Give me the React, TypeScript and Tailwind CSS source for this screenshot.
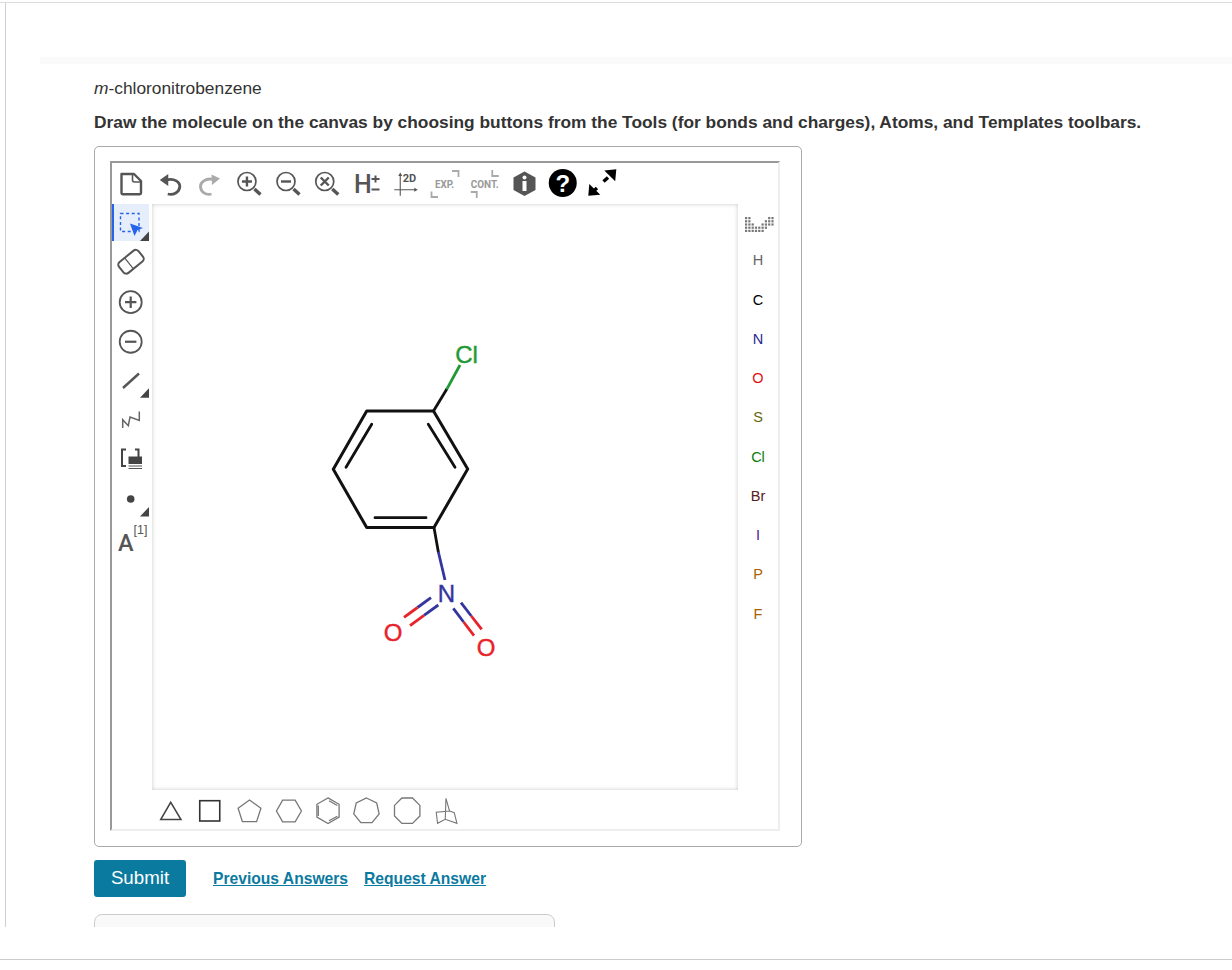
import type { ReactNode } from "react";

const SLOT = 39.25;
const FONT = '"Liberation Sans", Arial, sans-serif';
const ROBOTO = 'Roboto, "Liberation Sans", sans-serif';

// Icons are drawn in page coordinates, the viewBox starts at the slot's corner
function Slot({ x, y, w = SLOT, h = SLOT, children }: { x: number; y: number; w?: number; h?: number; children: ReactNode }) {
  return (
    <svg
      viewBox={`${x} ${y} ${w} ${h}`}
      width={w}
      height={h}
      className="block shrink-0 overflow-visible"
      fill="none"
    >
      {children}
    </svg>
  );
}

function polygon(cx: number, cy: number, r: number, n: number, startDeg: number) {
  const pts: string[] = [];
  for (let i = 0; i < n; i++) {
    const a = ((startDeg + (360 / n) * i) * Math.PI) / 180;
    pts.push(`${(cx + r * Math.cos(a)).toFixed(1)},${(cy + r * Math.sin(a)).toFixed(1)}`);
  }
  return pts.join(" ");
}

function Corner({ y }: { y: number }) {
  return <polygon points={`149,${y} 149,${y + 9.5} 140,${y + 9.5}`} fill="#444" />;
}

function Magnifier({ cx, children }: { cx: number; children: ReactNode }) {
  return (
    <>
      <circle cx={cx} cy={181.5} r={9} stroke="#555" strokeWidth={1.7} />
      <line x1={cx + 7.5} y1={189} x2={cx + 13.5} y2={194.5} stroke="#555" strokeWidth={3.4} />
      {children}
    </>
  );
}

function TopToolbar() {
  const c = (i: number) => 112 + SLOT * i;
  return (
    <div className="flex h-[41px]">
      <Slot x={c(0)} y={163} h={41}>
        <path d="M121.5 174 H134 L141 181 V193 Q141 194.2 139.8 194.2 H122.7 Q121.5 194.2 121.5 193 Z" stroke="#555" strokeWidth={2.4} strokeLinejoin="round" />
        <path d="M132.5 174.5 V180 Q132.5 182 134.5 182 H140.5" stroke="#555" strokeWidth={1.6} />
      </Slot>
      <Slot x={c(1)} y={163} h={41}>
        <polygon points="160,180 168.5,174 168.5,186" fill="#555" />
        <path d="M166 180 C175 177.5 180.5 182.5 180 187 C179.5 192 174 195.5 168 194" stroke="#555" strokeWidth={2.8} />
      </Slot>
      <Slot x={c(2)} y={163} h={41}>
        <polygon points="219.5,178.5 211,174.5 211.5,185" fill="#aaa" />
        <path d="M213 179.5 C205 177.5 199.5 182.5 200 187 C200.5 192 205 195.5 211 194" stroke="#aaa" strokeWidth={2.8} />
      </Slot>
      <Slot x={c(3)} y={163} h={41}>
        <Magnifier cx={246.7}>
          <path d="M241.7 181.5 H251.7 M246.7 176.5 V186.5" stroke="#555" strokeWidth={2.4} />
        </Magnifier>
      </Slot>
      <Slot x={c(4)} y={163} h={41}>
        <Magnifier cx={286}>
          <path d="M281 181.5 H291" stroke="#555" strokeWidth={2.4} />
        </Magnifier>
      </Slot>
      <Slot x={c(5)} y={163} h={41}>
        <Magnifier cx={325}>
          <path d="M321 177.5 L329 185.5 M329 177.5 L321 185.5" stroke="#555" strokeWidth={2.4} />
        </Magnifier>
      </Slot>
      <Slot x={c(6)} y={163} h={41}>
        <text x={353.5} y={192.7} fontFamily={ROBOTO} fontWeight={500} fontSize={25} fill="#555">H</text>
        <path d="M371 179 H379 M375 175.5 V182.5 M371 189.5 H379" stroke="#555" strokeWidth={2} />
      </Slot>
      <Slot x={c(7)} y={163} h={41}>
        <path d="M400 175 V195.7 M394 189.7 H415" stroke="#555" strokeWidth={1.1} />
        <polygon points="400,172.5 398,176 402,176" fill="#555" />
        <polygon points="417.5,189.7 414,187.7 414,191.7" fill="#555" />
        <text x={402.5} y={182.3} fontFamily={ROBOTO} fontWeight={700} fontSize={11} fill="#555">2D</text>
      </Slot>
      <Slot x={c(8)} y={163} h={41}>
        <path d="M452 171 H458.5 V177 M431.5 191.5 V197 H438" stroke="#aaa" strokeWidth={1.8} />
        <text x={435} y={188} textLength={19} lengthAdjust="spacingAndGlyphs" fontFamily={ROBOTO} fontWeight={700} fontSize={11.5} fill="#999">EXP.</text>
      </Slot>
      <Slot x={c(9)} y={163} h={41}>
        <path d="M492.5 170 V176 H499 M471 192 H477 V198" stroke="#aaa" strokeWidth={1.8} />
        <text x={471} y={188} textLength={28} lengthAdjust="spacingAndGlyphs" fontFamily={ROBOTO} fontWeight={700} fontSize={11.5} fill="#999">CONT.</text>
      </Slot>
      <Slot x={c(10)} y={163} h={41}>
        <polygon points="524,171.5 535,177.5 535,190 524,196 513,190 513,177.5" fill="#555" />
        <circle cx={524} cy={177.5} r={2} fill="#fff" />
        <rect x={522} y={181} width={4} height={10} fill="#fff" />
      </Slot>
      <Slot x={c(11)} y={163} h={41}>
        <circle cx={562.5} cy={183} r={14} fill="#000" />
        <text x={562.5} y={191.5} textAnchor="middle" fontFamily={FONT} fontWeight={700} fontSize={24} fill="#fff">?</text>
      </Slot>
      <Slot x={c(12)} y={163} h={41}>
        <polygon points="616.3,169.3 615.2,181.3 604.3,170.5" fill="#000" />
        <polygon points="588.3,195.7 589.3,184 600.3,194.7" fill="#000" />
        <path d="M608 177.5 L603.5 181.5 M597 188 L593 191.5" stroke="#000" strokeWidth={3.4} />
      </Slot>
    </div>
  );
}

function LeftToolbar() {
  const y = (i: number) => 204 + SLOT * i;
  return (
    <div className="flex w-[40px] shrink-0 flex-col">
      <div className="mb-[2.25px] h-[37px] w-[37px] border-l-2 border-[#2563eb] bg-[#e6eefb]">
        <svg viewBox="114 204 35 37" width={35} height={37} className="block overflow-visible" fill="none">
          <rect x={120.5} y={213.5} width={18.5} height={18} stroke="#2563eb" strokeWidth={1.4} strokeDasharray="3 2.6" />
          <polygon points="130,223.5 143,228 137.5,230 134.5,236" fill="#2563eb" />
          <Corner y={231.5} />
        </svg>
      </div>
      <Slot x={112} y={y(1)} w={40}>
        <g transform="translate(131 262) rotate(-39)" stroke="#555" strokeWidth={2}>
          <rect x={-12.5} y={-7} width={25} height={14} rx={3.5} />
          <line x1={-2.5} y1={-7} x2={-2.5} y2={7} strokeWidth={1.2} />
        </g>
      </Slot>
      <Slot x={112} y={y(2)} w={40}>
        <circle cx={130.7} cy={301.7} r={11} stroke="#555" strokeWidth={1.8} />
        <path d="M125 301.7 H136.4 M130.7 296 V307.4" stroke="#555" strokeWidth={2.2} />
      </Slot>
      <Slot x={112} y={y(3)} w={40}>
        <circle cx={130.7} cy={341.5} r={11} stroke="#555" strokeWidth={1.8} />
        <path d="M125 341.5 H136.4" stroke="#555" strokeWidth={2.2} />
      </Slot>
      <Slot x={112} y={y(4)} w={40}>
        <line x1={123} y1={388} x2={139} y2={373.5} stroke="#555" strokeWidth={2.4} />
        <Corner y={388.3} />
      </Slot>
      <Slot x={112} y={y(5)} w={40}>
        <polyline points="122.7,428.3 122.7,420 128.3,426 130,417.3 139.3,420.7 139.3,411.7" stroke="#666" strokeWidth={1.5} />
      </Slot>
      <Slot x={112} y={y(6)} w={40}>
        <path d="M126 449 H122 V465.5 H126" stroke="#444" strokeWidth={2} />
        <path d="M135 449 H138.5 V457" stroke="#444" strokeWidth={2} />
        <rect x={128.5} y={456} width={13.5} height={7.5} fill="#444" />
        <path d="M128.5 465.5 H142 M128.5 468 H142" stroke="#555" strokeWidth={1} />
      </Slot>
      <Slot x={112} y={y(7)} w={40}>
        <circle cx={130.7} cy={498.8} r={3.8} fill="#444" />
        <Corner y={506.7} />
      </Slot>
      <Slot x={112} y={y(8)} w={40}>
        <text x={118} y={551} fontFamily={ROBOTO} fontWeight={500} fontSize={23.5} fill="#555">A</text>
        <text x={133.5} y={534} fontFamily={FONT} fontSize={12.5} fill="#555">[1]</text>
      </Slot>
    </div>
  );
}

const ATOMS = [
  ["H", "text-[#666666]"],
  ["C", "text-[#000000]"],
  ["N", "text-[#28288c]"],
  ["O", "text-[#e01010]"],
  ["S", "text-[#66660a]"],
  ["Cl", "text-[#0a7d0a]"],
  ["Br", "text-[#5a2020]"],
  ["I", "text-[#5a1090]"],
  ["P", "text-[#a86000]"],
  ["F", "text-[#a86000]"],
];

// tiny periodic table, per column [first row, rows]
const TABLE_COLS = [
  [0, 5],
  [0, 5],
  [2, 3],
  [3, 2],
  [3, 2],
  [2, 3],
  [1, 3],
  [0, 3],
  [0, 3],
];

function RightToolbar() {
  return (
    <div className="flex w-[40px] shrink-0 flex-col">
      <Slot x={738} y={204} w={40} h={37.5}>
        {TABLE_COLS.map(([first, rows], col) =>
          Array.from({ length: rows }).map((_, r) => (
            <rect key={`${col}-${r}`} x={745 + col * 3.3} y={217 + (first + r) * 3.2} width={2.2} height={2.2} fill="#777" />
          ))
        )}
      </Slot>
      {ATOMS.map(([label, color]) => (
        <div key={label} className={`flex h-[39.25px] items-center justify-center text-[14.5px] ${color}`}>
          {label}
        </div>
      ))}
    </div>
  );
}

function Molecule() {
  const black = { stroke: "#111", strokeWidth: 2.8, strokeLinecap: "round" as const };
  const blue = "#3535a0";
  const red = "#e8222a";
  return (
    <svg viewBox="152 204 586 586" width={586} height={586} className="block" fill="none">
      <polygon points="433.5,411 467.7,469 434,527.5 366.7,527.5 333.3,469.3 366.7,411" stroke="#111" strokeWidth={3} strokeLinejoin="round" />
      <line x1={428.3} y1={424.3} x2={455} y2={467.3} {...black} />
      <line x1={375} y1={517.7} x2={426} y2={517.7} {...black} />
      <line x1={371.7} y1={424.3} x2={346} y2={467.3} {...black} />
      <line x1={433.5} y1={411} x2={446.7} y2={389.3} {...black} />
      <line x1={446.7} y1={389.3} x2={460} y2={365} stroke="#1f9a35" strokeWidth={2.8} />
      <line x1={434} y1={527.5} x2={438.3} y2={551.7} {...black} />
      <line x1={438.3} y1={551.7} x2={445} y2={580} stroke={blue} strokeWidth={2.8} />
      <g strokeWidth={2.8}>
        <line x1={431} y1={597.7} x2={417.5} y2={607.5} stroke={blue} />
        <line x1={417.5} y1={607.5} x2={404} y2={617.3} stroke={red} />
        <line x1={438.3} y1={605} x2={424} y2={615.3} stroke={blue} />
        <line x1={424} y1={615.3} x2={410} y2={625.7} stroke={red} />
        <line x1={461} y1={602.7} x2={471.3} y2={616} stroke={blue} />
        <line x1={471.3} y1={616} x2={481.7} y2={629.3} stroke={red} />
        <line x1={453.3} y1={608.3} x2={463.6} y2={622} stroke={blue} />
        <line x1={463.6} y1={622} x2={474} y2={635.7} stroke={red} />
      </g>
      <g fontFamily={FONT} fontSize={24} textAnchor="middle" strokeWidth={0.4}>
        <text x={466.5} y={362.5} fill="#1f9a35" stroke="#1f9a35">Cl</text>
        <text x={446.5} y={601.5} fill={blue} stroke={blue}>N</text>
        <text x={393} y={640.5} fill={red} stroke={red}>O</text>
        <text x={486} y={655.5} fill={red} stroke={red}>O</text>
      </g>
    </svg>
  );
}

function BottomToolbar() {
  const x = (i: number) => 152 + SLOT * i;
  const gray = { stroke: "#777", strokeWidth: 1.3 };
  return (
    <div className="flex h-[39px] w-[586px]">
      <Slot x={x(0)} y={790} h={39}>
        <polygon points="160.7,819.5 181,819.5 170.7,802.3" stroke="#444" strokeWidth={1.5} />
      </Slot>
      <Slot x={x(1)} y={790} h={39}>
        <rect x={200} y={800.7} width={20} height={20.3} stroke="#333" strokeWidth={1.6} />
      </Slot>
      <Slot x={x(2)} y={790} h={39}>
        <polygon points={polygon(249, 812, 12, 5, -90)} {...gray} />
      </Slot>
      <Slot x={x(3)} y={790} h={39}>
        <polygon points={polygon(288.7, 811, 12.5, 6, 0)} {...gray} />
      </Slot>
      <Slot x={x(4)} y={790} h={39}>
        <polygon points={polygon(328, 810.7, 12.8, 6, -90)} {...gray} />
        <path d="M318.3 805.5 V816 M329 800.8 L337.3 805.5 M337.3 816.2 L329 820.8" {...gray} />
      </Slot>
      <Slot x={x(5)} y={790} h={39}>
        <polygon points={polygon(366.7, 811, 13, 7, -90)} {...gray} />
      </Slot>
      <Slot x={x(6)} y={790} h={39}>
        <polygon points={polygon(406.7, 810.7, 13.8, 8, 22.5)} {...gray} />
      </Slot>
      <Slot x={x(7)} y={790} h={39}>
        <path d="M445.7 798.3 L449.3 811 L436 812.3 L437.3 823.3 L445 819.3 L456.7 823.3 L454 812.7 L449.3 811 M445.7 798.3 L445 819.3" stroke="#777" strokeWidth={1.1} />
      </Slot>
    </div>
  );
}

export default function App() {
  return (
    <div className="h-[970px] overflow-hidden bg-white pt-[2px] text-[#333333]" style={{ fontFamily: FONT }}>
      <div className="h-[925px] border-t border-[#dddddd]">
        <div className="ml-[5px] h-full overflow-hidden border-l border-[#c9d0dc]">
          <div className="ml-[34px] mt-[54px] h-[7px] bg-[#fafafa]" />
          <div className="pl-[88px]">
            <p className="mt-[14px] text-[17.35px] leading-[20px]">
              <em>m</em>-chloronitrobenzene
            </p>
            <p className="mt-[14px] text-[17.35px] font-bold leading-[20px]">
              Draw the molecule on the canvas by choosing buttons from the Tools (for bonds and charges), Atoms, and Templates toolbars.
            </p>
            <div className="mt-[14px] h-[701px] w-[708px] rounded-[5px] border border-[#aaaaaa] pl-[15px] pt-[14px]">
              <div className="h-[670px] w-[670px] border-2 border-b-[#eeeeee] border-l-[#999999] border-r-[#eeeeee] border-t-[#999999]">
                <TopToolbar />
                <div className="flex h-[586px]">
                  <LeftToolbar />
                  <div className="h-[586px] w-[586px] shrink-0 bg-white shadow-[inset_0_0_4px_rgba(0,0,0,0.22)]">
                    <Molecule />
                  </div>
                  <RightToolbar />
                </div>
                <div className="pl-[40px]">
                  <BottomToolbar />
                </div>
              </div>
            </div>
            <div className="mt-[13px] flex items-center">
              <button className="h-[37px] w-[92px] rounded-[3px] bg-[#0b7a9f] text-[18.7px] text-white">Submit</button>
              <a className="ml-[27px] text-[15.65px] font-bold text-[#0b7a9f] underline">Previous Answers</a>
              <a className="ml-[16px] text-[15.65px] font-bold text-[#0b7a9f] underline">Request Answer</a>
            </div>
            <div className="mt-[17px] h-[40px] w-[461px] rounded-[8px] border border-[#cccccc] bg-[#f9f9f9]" />
          </div>
        </div>
      </div>
      <div className="mt-[32px] border-t border-[#cccccc]" />
    </div>
  );
}
